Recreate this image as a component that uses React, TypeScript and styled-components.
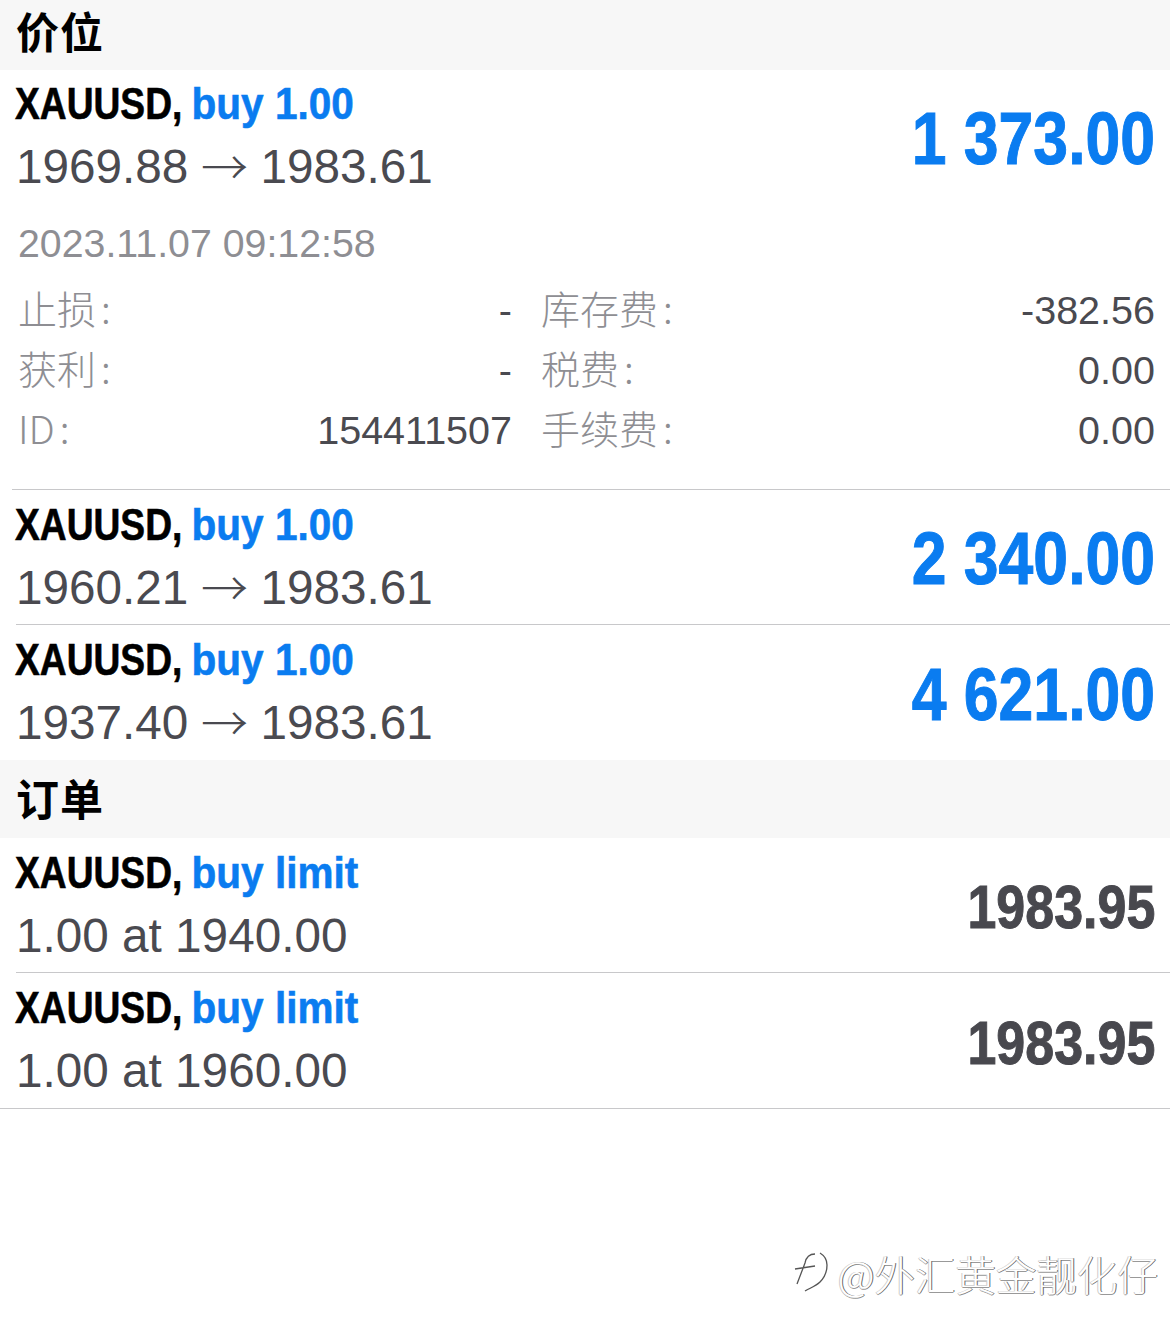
import * as React from 'react';
import styled, { createGlobalStyle } from 'styled-components';

const GlobalStyle = createGlobalStyle`
    html, body {
        margin: 0;
        padding: 0;
        background: #fff;
    }
    body {
        font-family: "Liberation Sans", "Noto Sans CJK SC", sans-serif;
    }
`;

interface Trade {
    side: string;
    from: string;
    to?: string;
    amount: string;
    height: number;
    inset: number;
}

const positions: Trade[] = [
    { side: 'buy 1.00', from: '1960.21', to: '1983.61', amount: '2 340.00', height: 134, inset: 16 },
    { side: 'buy 1.00', from: '1937.40', to: '1983.61', amount: '4 621.00', height: 135, inset: 0 },
];

const orders: Trade[] = [
    { side: 'buy limit', from: '1.00 at 1940.00', amount: '1983.95', height: 134, inset: 16 },
    { side: 'buy limit', from: '1.00 at 1960.00', amount: '1983.95', height: 135, inset: 0 },
];

const details = [
    { left: '止损', leftValue: '-', right: '库存费', rightValue: '-382.56' },
    { left: '获利', leftValue: '-', right: '税费', rightValue: '0.00' },
    { left: 'ID', leftValue: '154411507', right: '手续费', rightValue: '0.00' },
];

const Page = styled.div`
    position: relative;
    width: 1170px;
    height: 1341px;
    overflow: hidden;
    background: #fff;
`;

const SectionHeader = styled.div<{ $height: number; $lift: number }>`
    height: ${p => p.$height}px;
    box-sizing: border-box;
    padding: 0 0 ${p => p.$lift}px 16px;
    display: flex;
    align-items: center;
    background: #f7f7f7;
    color: #000;
    font-family: "Noto Sans CJK SC", sans-serif;
    font-size: 43px;
    letter-spacing: 1px;
    font-weight: 700;
    line-height: 1;
`;

const Row = styled.div<{ $height: number }>`
    height: ${p => p.$height}px;
    box-sizing: border-box;
    padding: 0 15px;
    display: flex;
    justify-content: space-between;
    align-items: center;
`;

const Divider = styled.div<{ $inset: number }>`
    height: 1px;
    margin-left: ${p => p.$inset}px;
    background: #c8c8ca;
`;

const Summary = styled.div<{ $lift: number }>`
    margin-top: -${p => p.$lift}px;
    display: flex;
    flex-direction: column;
    gap: 17px;
`;

const Title = styled.div`
    height: 46px;
    font-size: 44px;
    line-height: 46px;
    font-weight: 700;
    white-space: nowrap;
    color: #000;
    -webkit-text-stroke: 0.6px currentColor;
    transform: scaleX(0.845);
    transform-origin: left center;
`;

const Side = styled.span`
    display: inline-block;
    margin-left: -1px;
    color: #0a7cf0;
    transform: scaleX(1.09);
    transform-origin: left center;
`;

const Prices = styled.div`
    height: 46px;
    padding-left: 1px;
    display: flex;
    align-items: center;
    font-size: 47.7px;
    line-height: 46px;
    color: #4a4a50;
    white-space: nowrap;
`;

const Arrow = styled.span`
    margin: -4px 12.5px 0;
    font-family: "Noto Sans CJK SC", sans-serif;
    font-size: 47px;
    font-weight: 300;
`;

const Amount = styled.div<{ $size: number; $drop: number; $blue?: boolean }>`
    margin-top: ${p => p.$drop}px;
    font-size: ${p => p.$size}px;
    font-weight: 700;
    white-space: nowrap;
    color: ${p => (p.$blue ? '#0a7cf0' : '#48484e')};
    -webkit-text-stroke: 1px currentColor;
    transform: scaleX(0.845);
    transform-origin: right center;
`;

const Details = styled.div`
    height: 282px;
    box-sizing: border-box;
    padding: 14px 15px 0 18px;
`;

const Time = styled.div`
    height: 44px;
    margin-bottom: 10px;
    font-size: 39.3px;
    line-height: 44px;
    color: #8e8e93;
`;

const DetailRow = styled.div`
    height: 60px;
    display: grid;
    grid-template-columns: 494px 1fr;
    column-gap: 29px;
    font-size: 39.5px;
    line-height: 60px;
`;

const DetailCell = styled.div`
    display: flex;
    justify-content: space-between;
`;

const Label = styled.span`
    margin-top: 2px;
    color: #8e8e93;
    font-family: "Noto Sans CJK SC", sans-serif;
    font-weight: 300;
    font-size: 39px;
`;

const Colon = styled.span`
    margin-left: 5px;
`;

const Value = styled.span`
    margin-top: 5px;
    color: #4a4a50;
`;

const Watermark = styled.div`
    position: absolute;
    right: 12px;
    top: 1246px;
    display: flex;
    align-items: center;
    gap: 9px;
    font-family: "Noto Sans CJK SC", sans-serif;
    font-size: 40.5px;
    font-weight: 300;
    line-height: 56px;
    color: #fff;
    text-shadow: 1px 0 0 #666, -1px 0 0 #ccc, 0 1px 0 #999;
    white-space: nowrap;
`;

const BubbleIcon = () => (
    <svg width="36" height="50" viewBox="8 8 36 50" fill="none" stroke="#555" strokeWidth="1.3">
        <path d="M35 12c5 3 7 7 7 12 0 6-2 12-7 17-4 4-10 6-15 9" />
        <path d="M30 13c-6 0-9 4-10 9l-8 21M10 28l20-3" />
    </svg>
);

export default function App() {
    return (
        <Page>
            <GlobalStyle />
            <SectionHeader $height={70} $lift={10}>价位</SectionHeader>
            <Row $height={137}>
                <Summary $lift={6}>
                    <Title>XAUUSD, <Side>buy 1.00</Side></Title>
                    <Prices>1969.88<Arrow>→</Arrow>1983.61</Prices>
                </Summary>
                <Amount $size={74} $drop={0} $blue>1 373.00</Amount>
            </Row>
            <Details>
                <Time>2023.11.07 09:12:58</Time>
                {details.map(d => (
                    <DetailRow key={d.left}>
                        <DetailCell>
                            <Label>{d.left}<Colon>:</Colon></Label>
                            <Value>{d.leftValue}</Value>
                        </DetailCell>
                        <DetailCell>
                            <Label>{d.right}<Colon>:</Colon></Label>
                            <Value>{d.rightValue}</Value>
                        </DetailCell>
                    </DetailRow>
                ))}
            </Details>
            <Divider $inset={12} />
            {positions.map(p => (
                <React.Fragment key={p.from}>
                    <Row $height={p.height}>
                        <Summary $lift={2}>
                            <Title>XAUUSD, <Side>{p.side}</Side></Title>
                            <Prices>{p.from}<Arrow>→</Arrow>{p.to}</Prices>
                        </Summary>
                        <Amount $size={74} $drop={3} $blue>{p.amount}</Amount>
                    </Row>
                    {p.inset > 0 && <Divider $inset={p.inset} />}
                </React.Fragment>
            ))}
            <SectionHeader $height={78} $lift={3}>订单</SectionHeader>
            {orders.map(o => (
                <React.Fragment key={o.from}>
                    <Row $height={o.height}>
                        <Summary $lift={2}>
                            <Title>XAUUSD, <Side>{o.side}</Side></Title>
                            <Prices>{o.from}</Prices>
                        </Summary>
                        <Amount $size={61.5} $drop={3}>{o.amount}</Amount>
                    </Row>
                    <Divider $inset={o.inset} />
                </React.Fragment>
            ))}
            <Watermark>
                <BubbleIcon />
                <span>@外汇黄金靓化仔</span>
            </Watermark>
        </Page>
    );
}
